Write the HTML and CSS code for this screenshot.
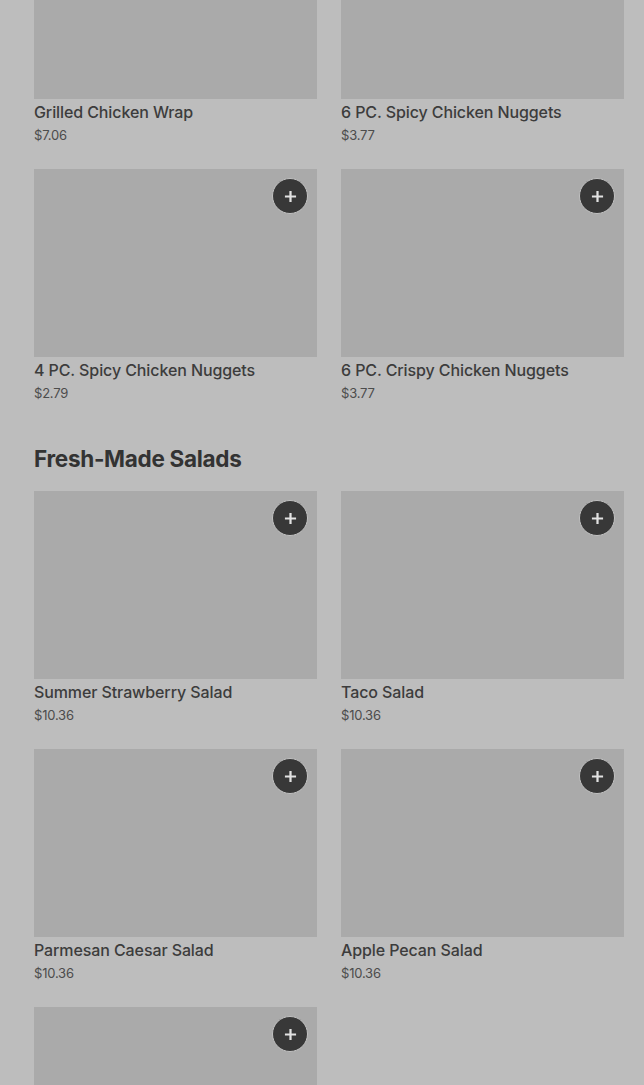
FILE: index.html
```html
<!DOCTYPE html>
<html lang="en">
<head>
  <meta charset="UTF-8">
  <title>Menu</title>
  <meta name="viewport" content="width=device-width, initial-scale=1.0">
  <link rel="stylesheet" href="styles.css">
</head>
<body>

<div class="menu">

  <div class="grid">
    <div class="item">
      <div class="thumb"></div>
      <div class="name">Grilled Chicken Wrap</div>
      <div class="price">$7.06</div>
    </div>
    <div class="item">
      <div class="thumb"></div>
      <div class="name">6 PC. Spicy Chicken Nuggets</div>
      <div class="price">$3.77</div>
    </div>
    <div class="item">
      <div class="thumb">
        <button class="add"><svg viewBox="0 0 14 14"><path d="M7 1v12M1 7h12"/></svg></button>
      </div>
      <div class="name">4 PC. Spicy Chicken Nuggets</div>
      <div class="price">$2.79</div>
    </div>
    <div class="item">
      <div class="thumb">
        <button class="add"><svg viewBox="0 0 14 14"><path d="M7 1v12M1 7h12"/></svg></button>
      </div>
      <div class="name">6 PC. Crispy Chicken Nuggets</div>
      <div class="price">$3.77</div>
    </div>
  </div>

  <h2 class="section-title">Fresh-Made Salads</h2>

  <div class="grid">
    <div class="item">
      <div class="thumb">
        <button class="add"><svg viewBox="0 0 14 14"><path d="M7 1v12M1 7h12"/></svg></button>
      </div>
      <div class="name">Summer Strawberry Salad</div>
      <div class="price">$10.36</div>
    </div>
    <div class="item">
      <div class="thumb">
        <button class="add"><svg viewBox="0 0 14 14"><path d="M7 1v12M1 7h12"/></svg></button>
      </div>
      <div class="name">Taco Salad</div>
      <div class="price">$10.36</div>
    </div>
    <div class="item">
      <div class="thumb">
        <button class="add"><svg viewBox="0 0 14 14"><path d="M7 1v12M1 7h12"/></svg></button>
      </div>
      <div class="name">Parmesan Caesar Salad</div>
      <div class="price">$10.36</div>
    </div>
    <div class="item">
      <div class="thumb">
        <button class="add"><svg viewBox="0 0 14 14"><path d="M7 1v12M1 7h12"/></svg></button>
      </div>
      <div class="name">Apple Pecan Salad</div>
      <div class="price">$10.36</div>
    </div>
    <div class="item">
      <div class="thumb">
        <button class="add"><svg viewBox="0 0 14 14"><path d="M7 1v12M1 7h12"/></svg></button>
      </div>
    </div>
  </div>

</div>

</body>
</html>
```

FILE: styles.css
```css
body {
  font-family: Inter, 'Liberation Sans', sans-serif;
  background: #bdbdbd;
  margin: 0;
  overflow: hidden;
}

.menu {
  margin-top: -89px;
  padding: 0 20px 0 34px;
}

.grid {
  display: grid;
  grid-template-columns: 1fr 1fr;
  gap: 24px;
}

.thumb {
  position: relative;
  height: 188px;
  background: #aaaaaa;
}

.add {
  position: absolute;
  top: 9px;
  right: 9px;
  width: 36px;
  height: 36px;
  border-radius: 50%;
  border: 1px solid #c2c2c2;
  background: #383838;
  padding: 0;
  display: flex;
  align-items: center;
  justify-content: center;
}

.add svg {
  width: 13px;
  height: 13px;
  fill: none;
  stroke: #e2e2e2;
  stroke-width: 2.4;
}

.name {
  margin-top: 2px;
  font-size: 16px;
  line-height: 22px;
  font-weight: 500;
  color: #3c3c3c;
  letter-spacing: -0.1px;
}

.price {
  margin-top: 2px;
  font-size: 13px;
  line-height: 20px;
  color: #4c4c4c;
  letter-spacing: -0.2px;
}

.section-title {
  margin: 40px 0 16px;
  font-size: 22.5px;
  line-height: 32px;
  font-weight: 700;
  color: #333;
  letter-spacing: -0.3px;
}
```
